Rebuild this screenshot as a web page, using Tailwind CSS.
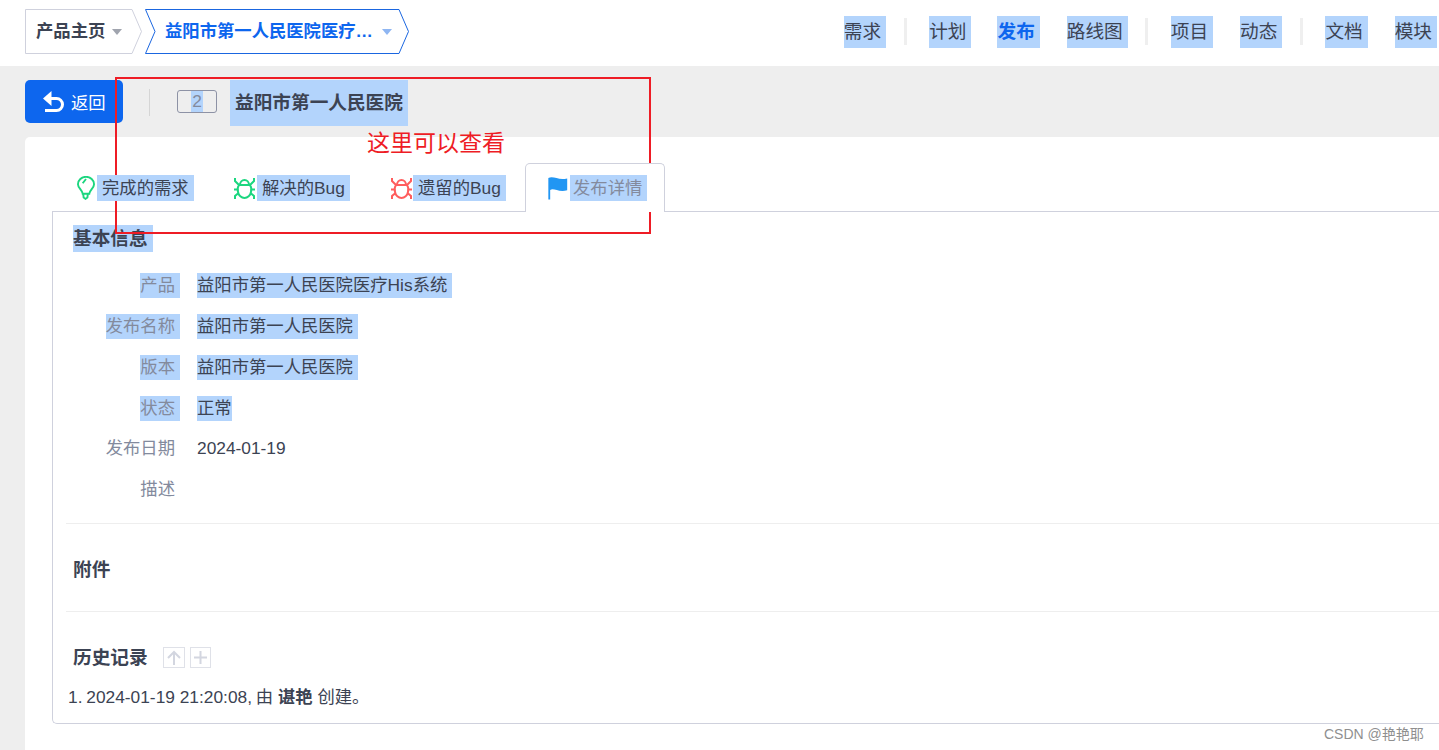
<!DOCTYPE html>
<html lang="zh"><head><meta charset="utf-8">
<script src="https://cdn.jsdelivr.net/npm/@tailwindcss/browser@4"></script>
<title>发布详情</title></head>
<body class="m-0 h-[750px] w-[1439px] overflow-hidden relative bg-[#eeeeee] text-[#3c4353] font-['Liberation_Sans','Noto_Sans_CJK_SC',sans-serif] text-[17.33px]">
<header class="h-[66px] bg-white flex items-center pl-[25px] pr-[2px]">
  <div class="relative w-[117px] h-[45px] flex items-center pl-[11px] mt-[-3px]">
    <svg class="absolute left-0 top-0" width="117" height="45" fill="none"><path d="M.5.5H107L116.500 22.500 107 44.500H.5Z" stroke="#cfd1dd"/></svg>
    <span class="relative font-bold whitespace-nowrap">产品主页</span>
    <svg class="relative ml-[7px]" width="10" height="6"><path d="M0 0h10L5 6Z" fill="#a0a4ae"/></svg>
  </div>
  <div class="relative w-[264px] h-[45px] ml-[3px] flex items-center pl-[20px] mt-[-3px]">
    <svg class="absolute left-0 top-0" width="264" height="45" fill="none"><path d="M.5.500H254L263.500 22.500 254 44.500H.5L10 22.500Z" stroke="#1a66e0"/></svg>
    <span class="relative font-bold whitespace-nowrap text-[#0d66ee]">益阳市第一人民医院医疗…</span>
    <svg class="relative ml-[9px]" width="10" height="6"><path d="M0 0h10L5 6Z" fill="#8fb6f2"/></svg>
  </div>
  <nav class="ml-auto flex items-center text-[18.67px] mt-[-3px]">
    <span class="bg-[#b3d4fc] leading-[32px] pr-[5px]">需求</span>
    <i class="w-[3px] h-[27px] bg-[#efefef] ml-[18px] mr-[22px]"></i>
    <span class="bg-[#b3d4fc] leading-[32px] pr-[5px]">计划</span>
    <span class="bg-[#b3d4fc] leading-[32px] pr-[5px] ml-[26px] font-bold text-[#0d66ee]">发布</span>
    <span class="bg-[#b3d4fc] leading-[32px] pr-[5px] ml-[27px]">路线图</span>
    <i class="w-[3px] h-[27px] bg-[#efefef] ml-[17px] mr-[23px]"></i>
    <span class="bg-[#b3d4fc] leading-[32px] pr-[5px]">项目</span>
    <span class="bg-[#b3d4fc] leading-[32px] pr-[5px] ml-[27px]">动态</span>
    <i class="w-[3px] h-[27px] bg-[#efefef] ml-[18px] mr-[22px]"></i>
    <span class="bg-[#b3d4fc] leading-[32px] pr-[5px]">文档</span>
    <span class="bg-[#b3d4fc] leading-[32px] pr-[5px] ml-[27px]">模块</span>
  </nav>
</header>

<div class="h-[71px] pl-[25px] pt-[14px] flex items-start">
  <button class="w-[98px] h-[43px] rounded-[5px] bg-[#0d66ee] text-white flex items-center pl-[18px] gap-[7px]">
    <svg width="21" height="21" viewBox="0 0 21 21"><path d="M0 7.500 8.500 0V15Z" fill="#fff"/><path d="M7 7.500h6.500a5.500 5.500 0 0 1 0 12H2" fill="none" stroke="#fff" stroke-width="3"/></svg>
    <span class="pt-[4px]">返回</span>
  </button>
  <i class="w-px h-[27px] bg-[#d5d5d5] ml-[26px] mt-[9px]"></i>
  <span class="ml-[27px] mt-[10px] w-[40px] h-[23px] border border-[#8d92a5] rounded-[3px] flex items-center justify-center text-[#838a9d] leading-none">
    <span class="bg-[#b3d4fc] px-px leading-[21px]">2</span>
  </span>
  <h1 class="ml-[13px] m-0 h-[46px] bg-[#b3d4fc] px-[5px] text-[18.67px] font-bold leading-[46px] w-[178px] whitespace-nowrap">益阳市第一人民医院</h1>
</div>

<main class="h-[613px] ml-[25px] bg-white rounded-tl-[5px] pt-[26px] pl-[27px]">
  <div class="h-[48px] flex items-center relative z-10">
    <div class="flex items-center pl-[25px] w-[181px] pt-[2px]">
      <svg class="mt-[-1px]" width="18" height="24" viewBox="0 0 19 25" fill="none" stroke="#1bd67f" stroke-width="2"><path d="M6 18.500C5.500 14.500 1 12.500 1 8.500a8.500 7.800 0 0 1 17 0c0 4-4.500 6-5 10ZM6.500 18.500l.5 4 2 1.500 2-1.500.5-4M6 7.500 9.500 3"/></svg>
      <span class="ml-[2px] bg-[#b3d4fc] leading-[26px] px-[5px]">完成的需求</span>
    </div>
    <div class="flex items-center w-[157px] pt-[2px]">
      <svg width="23" height="23" viewBox="0 0 23 23" fill="none" stroke="#1bd67f" stroke-width="2"><path d="M7 8a4.500 5 0 0 1 9 0M6 8h11c1.500 2 1.500 5 1 7-.5 3.500-3.500 6-6.500 6S5.500 18.500 5 15c-.5-2-.5-5 1-7ZM2 1v3l4 4M21 1v3l-4 4M1 12.500h4M18 12.500h4M2 22v-3l3.500-3M21 22v-3l-3.500-3"/></svg>
      <span class="bg-[#b3d4fc] leading-[26px] px-[5px] ml-[1px] whitespace-nowrap">解决的Bug</span>
    </div>
    <div class="flex items-center w-[135px] pt-[2px]">
      <svg width="23" height="23" viewBox="0 0 23 23" fill="none" stroke="#ff5d5d" stroke-width="2"><path d="M7 8a4.500 5 0 0 1 9 0M6 8h11c1.500 2 1.500 5 1 7-.5 3.500-3.500 6-6.500 6S5.500 18.500 5 15c-.5-2-.5-5 1-7ZM2 1v3l4 4M21 1v3l-4 4M1 12.500h4M18 12.500h4M2 22v-3l3.500-3M21 22v-3l-3.500-3"/></svg>
      <span class="bg-[#b3d4fc] leading-[26px] px-[5px] whitespace-nowrap">遗留的Bug</span>
    </div>
    <div class="h-[49px] w-[140px] border border-[#cfd1dd] border-b-0 rounded-t-[5px] bg-white flex items-center pl-[22px] mt-px">
      <svg width="20" height="23" viewBox="0 0 21 25"><path d="M0 1C6-1.500 11 4 20.500 1.500v13C11 17 6 11.500 2 14v10.500H0Z" fill="#2196f3"/></svg>
      <span class="ml-[2px] bg-[#b3d4fc] leading-[26px] pl-[3px] pr-[5px] text-[#838a9d]">发布详情</span>
    </div>
  </div>

  <section class="h-[513px] border-l border-b border-t border-[#cfd1dd] rounded-bl-[5px] pl-[13px] mt-0">
    <div class="pt-[13px] pl-[7px] h-[53.800px]">
      <h2 class="m-0 inline-block bg-[#b3d4fc] font-bold text-[18.67px] leading-[27px] pr-[5px]">基本信息</h2>
    </div>
    <dl class="m-0 h-[258.200px] border-b border-[#eeeeee]">
      <div class="h-[40.800px] flex items-center"><dt class="w-[114px] text-right"><span class="bg-[#b3d4fc] leading-[25px] inline-block pr-[5px] text-[#838a9d]">产品</span></dt><dd class="m-0 ml-[17px]"><span class="bg-[#b3d4fc] leading-[25px] inline-block pr-[5px]">益阳市第一人民医院医疗His系统</span></dd></div>
      <div class="h-[40.800px] flex items-center"><dt class="w-[114px] text-right"><span class="bg-[#b3d4fc] leading-[25px] inline-block pr-[5px] text-[#838a9d]">发布名称</span></dt><dd class="m-0 ml-[17px]"><span class="bg-[#b3d4fc] leading-[25px] inline-block pr-[5px]">益阳市第一人民医院</span></dd></div>
      <div class="h-[40.800px] flex items-center"><dt class="w-[114px] text-right"><span class="bg-[#b3d4fc] leading-[25px] inline-block pr-[5px] text-[#838a9d]">版本</span></dt><dd class="m-0 ml-[17px]"><span class="bg-[#b3d4fc] leading-[25px] inline-block pr-[5px]">益阳市第一人民医院</span></dd></div>
      <div class="h-[40.800px] flex items-center"><dt class="w-[114px] text-right"><span class="bg-[#b3d4fc] leading-[25px] inline-block pr-[5px] text-[#838a9d]">状态</span></dt><dd class="m-0 ml-[17px]"><span class="bg-[#b3d4fc] leading-[25px] inline-block">正常</span></dd></div>
      <div class="h-[40.800px] flex items-center"><dt class="w-[114px] text-right pr-[5px] text-[#838a9d]">发布日期</dt><dd class="m-0 ml-[17px]">2024-01-19</dd></div>
      <div class="h-[40.800px] flex items-center"><dt class="w-[114px] text-right pr-[5px] text-[#838a9d]">描述</dt><dd class="m-0 ml-[17px]"></dd></div>
    </dl>
    <div class="h-[88px] border-b border-[#eeeeee] flex items-center pl-[7px] pt-[6px]">
      <h2 class="m-0 font-bold text-[18.67px]">附件</h2>
    </div>
    <div class="h-[92px] flex items-center pl-[7px]">
      <h2 class="m-0 font-bold text-[18.67px]">历史记录</h2>
      <span class="ml-[15px] w-[22px] h-[21px] border border-[#dfe1e8] flex items-center justify-center">
        <svg width="16" height="16" viewBox="0 0 16 16" fill="none" stroke="#d3d6e0" stroke-width="2"><path d="M8 15V2M2 8l6-6 6 6"/></svg>
      </span>
      <span class="ml-[5px] w-[21px] h-[21px] border border-[#dfe1e8] flex items-center justify-center">
        <svg width="15" height="15" viewBox="0 0 15 15" fill="none" stroke="#d3d6e0" stroke-width="2"><path d="M7.500 1v13M1 7.500h13"/></svg>
      </span>
    </div>
    <ol class="m-0 p-0 mt-[-19px] leading-[25px]">
      <li class="whitespace-nowrap pl-[2px]">1. <span class="-ml-px">2024-01-19 21:20:08,</span> <span class="-ml-px">由</span> <strong class="font-bold">谌艳</strong> 创建。</li>
    </ol>
  </section>
</main>

<div class="absolute left-[115px] top-[77px] w-[536px] h-[157px] border-2 border-[#ee1c25] pointer-events-none"></div>
<div class="absolute left-[367px] top-[127px] text-[23px] leading-[32px] text-[#ee1c25]">这里可以查看</div>
<div class="absolute left-[1324px] top-[724px] text-[14px] leading-[20px] text-[#8f8f8f] whitespace-nowrap">CSDN @艳艳耶</div>
</body></html>
